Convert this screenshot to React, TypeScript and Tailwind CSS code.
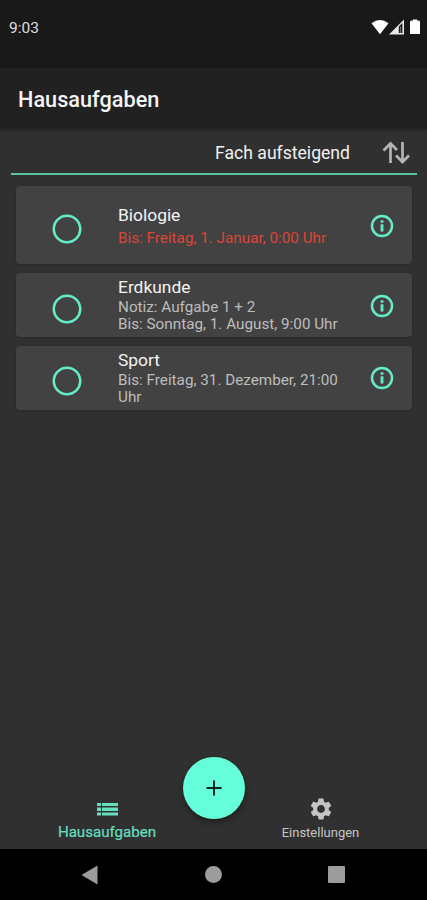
import { MdSettings } from "react-icons/md";

const tasks = [
  {
    subject: 'Biologie',
    lines: ['Bis: Freitag, 1. Januar, 0:00 Uhr'],
    overdue: true,
    box: "h-[78px] mb-[9px] pt-[19px]",
    gap: "mt-[5px]",
    ring: "mt-[9px]",
    info: "mt-[9px]",
  },
  {
    subject: 'Erdkunde',
    lines: ['Notiz: Aufgabe 1 + 2', 'Bis: Sonntag, 1. August, 9:00 Uhr'],
    overdue: false,
    box: "h-[64px] mb-[9px] pt-[4px]",
    gap: "mt-[2px]",
    ring: "mt-[17px]",
    info: "mt-[17px]",
  },
  {
    subject: 'Sport',
    lines: ['Bis: Freitag, 31. Dezember, 21:00 Uhr'],
    overdue: false,
    box: "h-[64px] pt-[4px]",
    gap: "mt-[2px]",
    ring: "mt-[16px]",
    info: "mt-[16px]",
  },
];

function StatusBar() {
  return (
    <div className="h-[68px] bg-[#191919] flex flex-row justify-between items-start pl-[9px] pr-[7px] pt-[18px]">
      <p className="text-[15.5px] leading-[21px] text-[#dedede]">9:03</p>
      <div className="flex flex-row pt-px">
        <svg width="18" height="16" viewBox="0 0 18 16" fill="#fff">
          <path d="M0.500 4.200Q9 -2.400 17.500 4.200L9 15.200Z" />
        </svg>
        <svg width="16" height="16" viewBox="0 0 16 16" className="mr-[5px]">
          <path d="M0 15.500L15 0.500V15.500Z" fill="#e8e8e8" />
          <path d="M9.800 7.400L13.400 4V14H9.800Z" fill="#191919" />
          <path d="M11.100 7.600h1v6.400h-1z" fill="#777" />
        </svg>
        <svg width="10" height="16" viewBox="0 0 10 16" fill="#fff">
          <path d="M3 0.500h4v1h1.500Q10 1.500 10 3V15H0V3Q0 1.500 1.500 1.500H3Z" />
        </svg>
      </div>
    </div>
  );
}

function InfoIcon() {
  return (
    <svg width="24" height="24" viewBox="0 0 24 24" fill="none" stroke="#64ecc8" strokeWidth="2.500">
      <circle cx="12" cy="12" r="10" />
      <path d="M12 6.200V8.800M12 10.300V17.500" strokeWidth="2.800" />
    </svg>
  );
}

function Task({ task }) {
  return (
    <div className={`${task.box} bg-[#424242] rounded-[4px] shadow-[0_1px_2px_rgba(0,0,0,0.2)] flex flex-row items-start pl-[36px] pr-[18px]`}>
      <svg className={`${task.ring} shrink-0`} width="30" height="30" viewBox="0 0 30 30" fill="none" stroke="#64ecc8" strokeWidth="2.600">
        <circle cx="15" cy="15" r="13.200" />
      </svg>
      <div className="ml-[36px] w-[235px] shrink-0">
        <p className="text-[17.4px] leading-[20px] text-[#f4f4f4]">{task.subject}</p>
        <div className={`${task.gap} ${task.overdue ? "text-[#dc4537]" : "text-[#bdbdbd]"} text-[15.25px] leading-[17px]`}>
          {task.lines.map((line) => <p key={line}>{line}</p>)}
        </div>
      </div>
      <div className={`${task.info} ml-auto`}>
        <InfoIcon />
      </div>
    </div>
  );
}

export default function App() {
  return (
    <div className="w-[427px] h-[900px] bg-[#303030] flex flex-col font-['Roboto',sans-serif] overflow-hidden">
      <StatusBar />
      <header className="h-[61px] bg-[#212121] flex items-center pl-[18px] pt-[3px] shadow-[0_1px_3px_rgba(0,0,0,0.3)]">
        <h1 className="text-[21.7px] font-medium text-[#f4f4f4]">Hausaufgaben</h1>
      </header>

      <div className="ml-[11px] mr-[10px] h-[46px] border-b-2 border-[#5cc4a6] flex flex-row justify-end items-center pr-[7px] pt-[2px]">
        <p className="text-[17.6px] text-[#f0f0f0] mr-[32px] mt-[2px]">Fach aufsteigend</p>
        <svg width="28" height="24" viewBox="0 0 28 24" fill="none" stroke="#b4b4b4" strokeWidth="2.700" className="mt-[2px]">
          <path d="M8.500 22V3.500M1.500 9.500L8.500 2.500L15 9M20.500 1V20M14 14.500L20.500 21L27 14.500" />
        </svg>
      </div>

      <main className="flex-1 pr-[15px] pt-[11px] pl-[16px]">
        {tasks.map((task) => <Task key={task.subject} task={task} />)}
      </main>

      <footer className="h-[92px] flex flex-row items-start">
        <div className="w-[214px] pt-[46px] flex flex-col items-center text-[#66dfbf]">
          <svg width="21" height="13" viewBox="0 0 21 13" fill="currentColor">
            <path d="M0 0h4v3h-4zM5 0h16v3h-16zM0 4.500h4v3.500h-4zM5 4.500h16v3.500h-16zM0 9.500h4v3h-4zM5 9.500h16v3h-16z" />
          </svg>
          <p className="text-[15.1px] leading-[20px] mt-[6px] [-webkit-text-stroke:0.2px]">Hausaufgaben</p>
        </div>
        <button className="w-[62px] h-[62px] -mx-[31px] rounded-full bg-[#64ffda] flex items-center justify-center shrink-0 z-10 shadow-[0_3px_6px_rgba(0,0,0,0.4)]">
          <svg width="16" height="16" viewBox="0 0 16 16" stroke="#10231e" strokeWidth="2">
            <path d="M8 0.500V15.500M0.500 8H15.500" />
          </svg>
        </button>
        <div className="w-[213px] pt-[39px] flex flex-col items-center text-[#c4c4c4]">
          <MdSettings size={26} />
          <p className="text-[13px] leading-[18px] mt-[2px]">Einstellungen</p>
        </div>
      </footer>

      <nav className="h-[51px] bg-black flex flex-row items-center pl-[81px] pr-[82px] justify-between">
        <svg width="17" height="20" viewBox="0 0 17 20" fill="#9c9c9c">
          <path d="M0.500 10L16.500 0.500V19.500Z" />
        </svg>
        <div className="w-[17px] h-[17px] rounded-full bg-[#9c9c9c]"></div>
        <div className="w-[17px] h-[17px] rounded-[1px] bg-[#9c9c9c]"></div>
      </nav>
    </div>
  );
}
